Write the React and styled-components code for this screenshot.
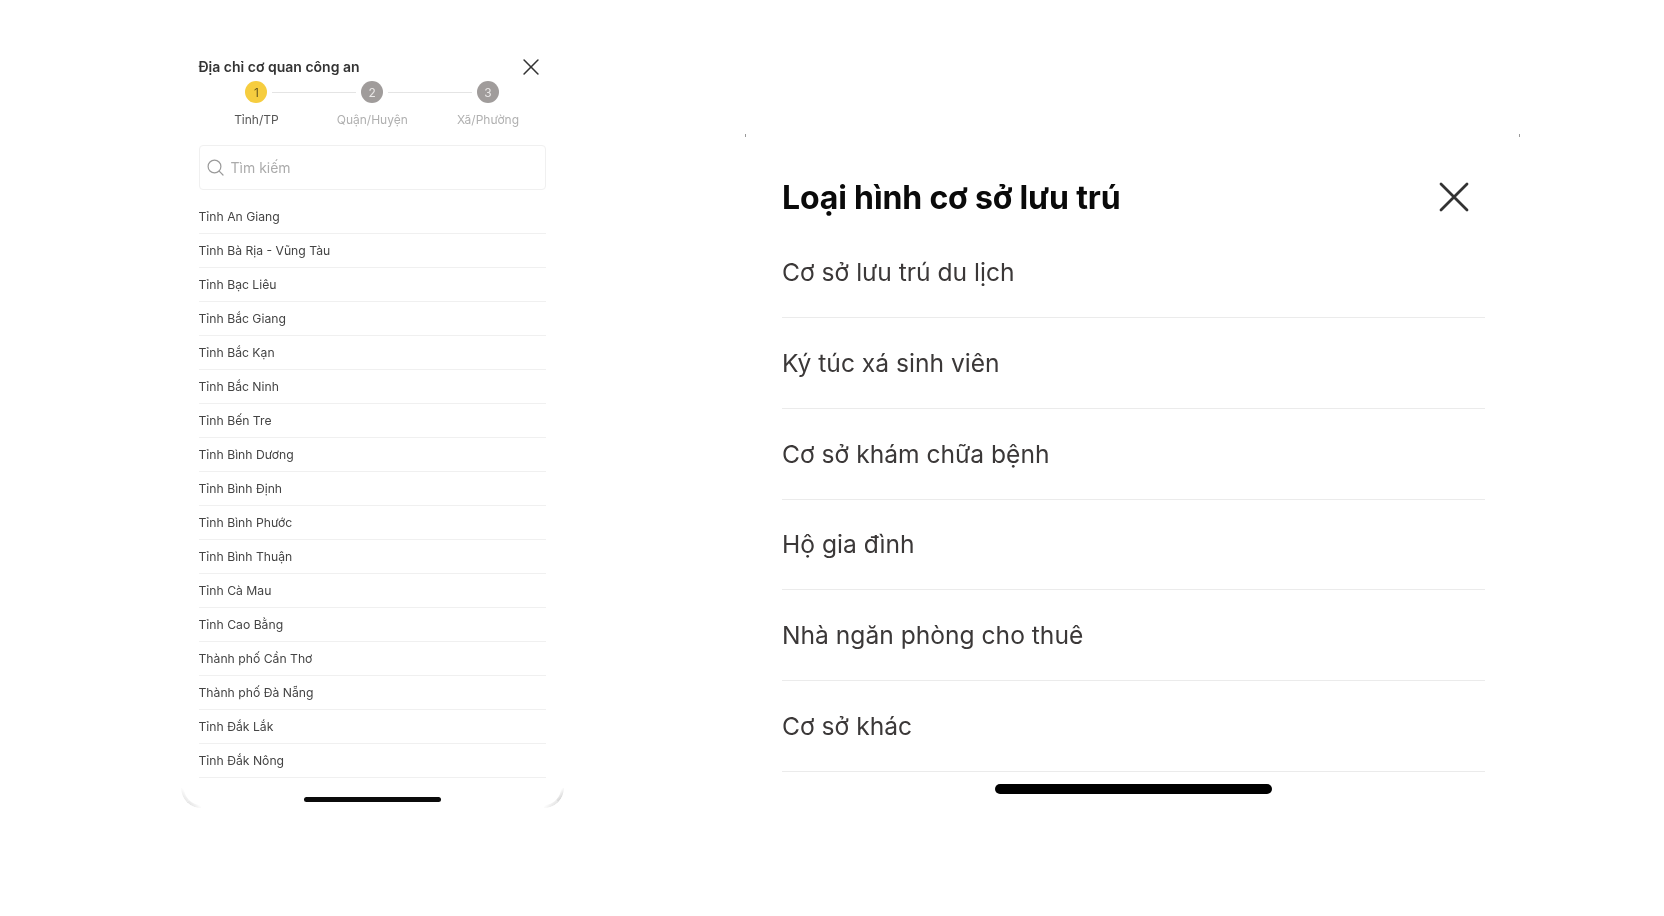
import React from "react";
import styled, { createGlobalStyle } from "styled-components";

const Global = createGlobalStyle`
  html, body { margin: 0; padding: 0; background: #fff; }
  body { font-family: Inter, "Noto Sans", "Liberation Sans", sans-serif; }
`;

const Page = styled.div`
  width: 1664px;
  height: 916px;
  display: flex;
  align-items: flex-start;
  gap: 181px;
  padding-left: 180.5px;
  box-sizing: border-box;
  overflow: hidden;
  background: #fff;
  filter: blur(0.35px);
`;

const Sheet = styled.section`
  position: relative;
  width: 383.5px;
  height: 760px;
  margin-top: 48px;
  padding: 0 18px;
  box-sizing: border-box;
  border-radius: 0 0 20px 20px;
`;

const SheetCorner = styled.span`
  position: absolute;
  bottom: 0;
  ${(p) => (p.$right ? "right: 0;" : "left: 0;")}
  width: 20px;
  height: 20px;
  box-sizing: border-box;
  border-bottom: 3px solid #e4e4e4;
  ${(p) => (p.$right ? "border-right: 3px solid #d4d4d4;" : "border-left: 3px solid #e8e8e8;")}
  ${(p) => (p.$right ? "border-bottom-right-radius: 20px;" : "border-bottom-left-radius: 20px;")}
  -webkit-mask-image: ${(p) =>
    p.$right
      ? "linear-gradient(135deg, transparent 46%, #000 70%)"
      : "linear-gradient(225deg, transparent 46%, #000 70%)"};
`;

const SheetHeader = styled.header`
  height: 37px;
  display: flex;
  align-items: center;
  justify-content: space-between;
`;

const SheetTitle = styled.h2`
  margin: 0;
  font-size: 14px;
  font-weight: 600;
  color: #333;
`;

const SmallClose = styled.button`
  width: 16px;
  height: 16px;
  padding: 0;
  margin-right: 7px;
  border: 0;
  background: none;
  display: flex;
  color: #333;
`;

const Stepper = styled.ol`
  list-style: none;
  margin: -4px 0 0;
  padding: 0;
  display: grid;
  grid-template-columns: repeat(3, 1fr);
`;

const Step = styled.li`
  display: flex;
  flex-direction: column;
  align-items: center;
`;

const Track = styled.div`
  width: 100%;
  display: flex;
  align-items: center;
  gap: 5px;
`;

const TrackLine = styled.span`
  flex: 1;
  height: 1px;
  background: ${(p) => (p.$hidden ? "transparent" : "#e4e4e4")};
`;

const StepDot = styled.span`
  width: 22px;
  height: 22px;
  border-radius: 50%;
  display: flex;
  align-items: center;
  justify-content: center;
  font-size: 12px;
  background: ${(p) => (p.$active ? "#f6cd3f" : "#a09c9b")};
  color: ${(p) => (p.$active ? "#6b5a1e" : "#e9e7e6")};
`;

const StepLabel = styled.span`
  margin-top: 9px;
  font-size: 12px;
  line-height: 15px;
  color: ${(p) => (p.$active ? "#555" : "#b0b0b0")};
`;

const SearchBox = styled.div`
  height: 45px;
  margin-top: 18px;
  padding-left: 7px;
  box-sizing: border-box;
  display: flex;
  align-items: center;
  gap: 7px;
  border: 1px solid #f0f0f0;
  border-radius: 4px;
  font-size: 14px;
  color: #ababab;
`;

const ProvinceList = styled.ul`
  list-style: none;
  margin: 10px 0 0;
  padding: 0;
`;

const ProvinceRow = styled.li`
  height: 34px;
  box-sizing: border-box;
  display: flex;
  align-items: center;
  border-bottom: 1px solid #f0f0f0;
  font-size: 12.2px;
  color: #444;
`;

const SmallHomeBar = styled.div`
  width: 137px;
  height: 4.5px;
  margin: 19px auto 0;
  border-radius: 3px;
  background: #0b0b0b;
`;

const Modal = styled.section`
  position: relative;
  width: 775px;
  margin-top: 134px;
  padding: 0 35px 0 37px;
  box-sizing: border-box;
`;

const CornerTick = styled.i`
  position: absolute;
  top: 0;
  ${(p) => (p.$right ? "right: 0;" : "left: 0;")}
  width: 1px;
  height: 3px;
  background: #9a9a9a;
`;

const ModalHeader = styled.header`
  height: 40px;
  padding: 43px 16px 10.5px 0;
  display: flex;
  align-items: center;
  justify-content: space-between;
`;

const ModalTitle = styled.h1`
  margin: 0;
  font-size: 32px;
  font-weight: 700;
  letter-spacing: -0.15px;
  color: #0a0a0a;
`;

const LargeClose = styled.button`
  width: 30px;
  height: 30px;
  padding: 0;
  border: 0;
  background: none;
  display: flex;
  color: #333;
`;

const TypeRow = styled.div`
  height: 90.7px;
  box-sizing: border-box;
  display: flex;
  align-items: center;
  border-bottom: 1.5px solid #ebebeb;
  font-size: 24.6px;
  color: #3b3838;
`;

const LargeHomeBar = styled.div`
  width: 277px;
  height: 9.5px;
  margin: 12.5px auto 0;
  border-radius: 5px;
  background: #000;
`;

const CloseIcon = ({ size, width }) => (
  <svg width={size} height={size} viewBox="0 0 30 30" fill="none" stroke="currentColor" strokeWidth={width} strokeLinecap="round">
    <path d="M2 2 28 28M28 2 2 28" />
  </svg>
);

const SearchIcon = () => (
  <svg width="17" height="17" viewBox="0 0 17 17" fill="none" stroke="#9a9a9a" strokeWidth="1.2" strokeLinecap="round">
    <circle cx="7.5" cy="7.5" r="6.4" />
    <path d="m12.2 12.2 3.8 3.8" />
  </svg>
);

const steps = ["Tỉnh/TP", "Quận/Huyện", "Xã/Phường"];
const provinces = [
  "Tỉnh An Giang", "Tỉnh Bà Rịa - Vũng Tàu", "Tỉnh Bạc Liêu", "Tỉnh Bắc Giang", "Tỉnh Bắc Kạn",
  "Tỉnh Bắc Ninh", "Tỉnh Bến Tre", "Tỉnh Bình Dương", "Tỉnh Bình Định", "Tỉnh Bình Phước",
  "Tỉnh Bình Thuận", "Tỉnh Cà Mau", "Tỉnh Cao Bằng", "Thành phố Cần Thơ", "Thành phố Đà Nẵng",
  "Tỉnh Đắk Lắk", "Tỉnh Đắk Nông",
];
const types = [
  "Cơ sở lưu trú du lịch", "Ký túc xá sinh viên", "Cơ sở khám chữa bệnh",
  "Hộ gia đình", "Nhà ngăn phòng cho thuê", "Cơ sở khác",
];

export default function App() {
  return (
    <Page>
      <Global />
      <Sheet>
        <SheetHeader>
          <SheetTitle>Địa chỉ cơ quan công an</SheetTitle>
          <SmallClose aria-label="Đóng"><CloseIcon size={16} width={2.9} /></SmallClose>
        </SheetHeader>
        <Stepper>
          {steps.map((label, i) => (
            <Step key={label}>
              <Track>
                <TrackLine $hidden={i === 0} />
                <StepDot $active={i === 0}>{i + 1}</StepDot>
                <TrackLine $hidden={i === steps.length - 1} />
              </Track>
              <StepLabel $active={i === 0}>{label}</StepLabel>
            </Step>
          ))}
        </Stepper>
        <SearchBox><SearchIcon />Tìm kiếm</SearchBox>
        <ProvinceList>
          {provinces.map((p) => <ProvinceRow key={p}>{p}</ProvinceRow>)}
        </ProvinceList>
        <SmallHomeBar />
        <SheetCorner />
        <SheetCorner $right />
      </Sheet>
      <Modal>
        <CornerTick />
        <CornerTick $right />
        <ModalHeader>
          <ModalTitle>Loại hình cơ sở lưu trú</ModalTitle>
          <LargeClose aria-label="Đóng"><CloseIcon size={30} width={2.8} /></LargeClose>
        </ModalHeader>
        {types.map((t) => <TypeRow key={t}>{t}</TypeRow>)}
        <LargeHomeBar />
      </Modal>
    </Page>
  );
}
